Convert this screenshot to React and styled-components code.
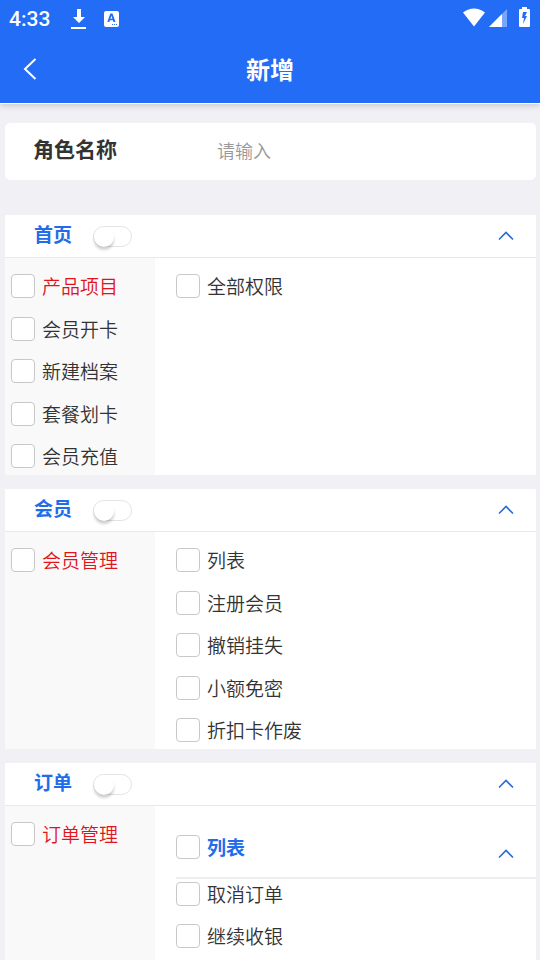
import { useState } from "react";
import styled, { createGlobalStyle } from "styled-components";

const GlobalStyle = createGlobalStyle`
  * {
    box-sizing: border-box;
  }
  body {
    margin: 0;
    background-color: #f0f0f5;
    color: #333;
    font-family: "Noto Sans CJK SC", "Noto Sans", sans-serif;
  }
  input, button {
    font-family: inherit;
  }
`;

const Container = styled.div`
  height: 100vh;
  display: flex;
  flex-direction: column;
`;

const Header = styled.header`
  flex-shrink: 0;
  z-index: 1;
  color: white;
  background-color: #226cf6;
  border-bottom: 1px solid white;
  box-shadow: 0px 2px 6px rgba(0, 0, 0, 0.16);
`;

const StatusBar = styled.div`
  height: 36px;
  padding: 0px 9px;
  display: flex;
  align-items: center;
  justify-content: space-between;
`;

const StatusGroup = styled.div`
  display: flex;
  align-items: center;
`;

const Time = styled.span`
  width: 61px;
  padding-top: 2px;
  font-family: Roboto, sans-serif;
  font-size: 21px;
  font-weight: 500;
`;

const NavBar = styled.div`
  height: 67px;
  padding: 0px 18px 2px;
  display: grid;
  grid-template-columns: 24px 1fr 24px;
  align-items: center;
`;

const IconButton = styled.button`
  display: flex;
  align-items: center;
  justify-content: center;
  width: 24px;
  height: 32px;
  padding: 0;
  border: none;
  background: none;
  color: inherit;
  cursor: pointer;
`;

const Title = styled.h1`
  margin: 0;
  font-size: 24px;
  line-height: 32px;
  font-weight: 700;
  text-align: center;
`;

const Content = styled.main`
  flex: 1;
  min-height: 0;
  padding: 19px 4px 0px 5px;
  overflow-y: auto;
  scrollbar-width: none;
`;

const Field = styled.label`
  height: 57px;
  margin-bottom: 35px;
  padding: 0px 28px 4px;
  display: flex;
  align-items: center;
  background-color: white;
  border-radius: 5px;
`;

const FieldName = styled.span`
  width: 184px;
  padding-bottom: 4px;
  font-size: 21px;
  line-height: 32px;
  font-weight: 700;
`;

const FieldInput = styled.input`
  flex: 1;
  min-width: 0;
  padding: 0;
  border: none;
  outline: none;
  font-size: 18px;
  font-weight: 350;
  color: #333;
  &::placeholder {
    color: #999;
    opacity: 1;
  }
`;

const Section = styled.section`
  margin-bottom: 14px;
  background-color: white;
`;

const SectionHeader = styled.div`
  height: 43px;
  padding: 0px 18px 0px 29px;
  display: flex;
  align-items: center;
  border-bottom: 1px solid #e8e8ea;
`;

const SectionTitle = styled.h2`
  flex-basis: 59px;
  margin: 0;
  padding-bottom: 4px;
  font-size: 19px;
  line-height: 28px;
  font-weight: 700;
  color: #226cea;
`;

const Switch = styled.input`
  appearance: none;
  display: flex;
  width: 39px;
  height: 21px;
  margin: 0px auto 0px 0px;
  border: 1px solid #e3e3e3;
  border-radius: 11px;
  background-color: ${(props) => (props.checked ? "#226cf6" : "white")};
  cursor: pointer;
  &::before {
    content: "";
    width: 20px;
    height: 20px;
    margin-left: ${(props) => (props.checked ? "18px" : "0px")};
    border-radius: 50%;
    background-color: white;
    box-shadow: 0px 3px 3px rgba(0, 0, 0, 0.2);
  }
`;

const SectionBody = styled.div`
  display: grid;
  grid-template-columns: 150px 1fr;
  min-height: 217px;
`;

const List = styled.div`
  display: flex;
  flex-direction: column;
  justify-content: ${(props) => (props.$full ? "space-between" : "flex-start")};
  gap: 18px;
  padding: ${(props) => (props.$nested ? "3px 0px 7px" : "16px 0px 7px")};
`;

const Modules = styled(List)`
  padding-left: 6px;
  background-color: #f9f9f9;
`;

const Permissions = styled(List)`
  padding-left: 21px;
`;

const Group = styled.div`
  padding-left: 21px;
`;

const GroupHeader = styled.div`
  height: 73px;
  padding: 11px 18px 0px 0px;
  display: flex;
  align-items: center;
  justify-content: space-between;
  border-bottom: 2px solid #ededf2;
`;

const GroupToggle = styled.div`
  padding-top: 14px;
`;

const Item = styled.label`
  height: 24px;
  display: flex;
  align-items: center;
  gap: 7px;
  font-size: 19px;
  line-height: 24px;
  font-weight: ${(props) => (props.$bold ? 700 : 350)};
  color: ${(props) => props.$color || "#333"};
  cursor: pointer;
`;

const Box = styled.input`
  appearance: none;
  flex-shrink: 0;
  width: 24px;
  height: 24px;
  margin: 0;
  border: 1px solid #c8c8c8;
  border-radius: 4px;
  background-color: white;
  &:checked {
    border-color: #226cf6;
    background-color: #226cf6;
  }
`;

const Arrow = styled.svg`
  display: block;
  color: #2a6bd8;
  transform: ${(props) => (props.$open ? "none" : "rotate(180deg)")};
`;

const data = [
  {
    title: "首页",
    modules: ["产品项目", "会员开卡", "新建档案", "套餐划卡", "会员充值"],
    permissions: ["全部权限"],
  },
  {
    title: "会员",
    modules: ["会员管理"],
    permissions: ["列表", "注册会员", "撤销挂失", "小额免密", "折扣卡作废"],
  },
  {
    title: "订单",
    modules: ["订单管理"],
    group: "列表",
    permissions: ["取消订单", "继续收银"],
  },
];

const ToggleArrow = ({ open, label, onClick }) => (
  <IconButton
    type="button"
    aria-label={label}
    aria-expanded={open}
    onClick={onClick}
  >
    <Arrow $open={open} width="16" height="10" viewBox="0 0 16 10">
      <path
        d="M1 8.500L8 1.500L15 8.500"
        fill="none"
        stroke="currentColor"
        strokeWidth="1.6"
      />
    </Arrow>
  </IconButton>
);

const CheckItem = ({ text, color, bold }) => (
  <Item $color={color} $bold={bold}>
    <Box type="checkbox" />
    {text}
  </Item>
);

const PermissionSection = ({ section }) => {
  const [open, setOpen] = useState(true);
  const [groupOpen, setGroupOpen] = useState(true);
  const [enabled, setEnabled] = useState(false);

  const items = section.permissions.map((text) => (
    <CheckItem key={text} text={text} />
  ));

  return (
    <Section>
      <SectionHeader>
        <SectionTitle>{section.title}</SectionTitle>
        <Switch
          type="checkbox"
          role="switch"
          aria-label={section.title}
          checked={enabled}
          onChange={(e) => setEnabled(e.target.checked)}
        />
        <ToggleArrow
          open={open}
          label={section.title}
          onClick={() => setOpen(!open)}
        />
      </SectionHeader>
      {open && (
        <SectionBody>
          <Modules $full={section.modules.length > 4}>
            {section.modules.map((text, i) => (
              <CheckItem
                key={text}
                text={text}
                color={i === 0 ? "#e0141a" : undefined}
              />
            ))}
          </Modules>
          {section.group ? (
            <Group>
              <GroupHeader>
                <CheckItem text={section.group} color="#226cea" bold />
                <GroupToggle>
                  <ToggleArrow
                    open={groupOpen}
                    label={section.group}
                    onClick={() => setGroupOpen(!groupOpen)}
                  />
                </GroupToggle>
              </GroupHeader>
              {groupOpen && <List $nested>{items}</List>}
            </Group>
          ) : (
            <Permissions $full={section.permissions.length > 4}>
              {items}
            </Permissions>
          )}
        </SectionBody>
      )}
    </Section>
  );
};

const App = () => {
  const [name, setName] = useState("");

  return (
    <Container>
      <GlobalStyle />
      <Header>
        <StatusBar>
          <StatusGroup>
            <Time>4:33</Time>
            {/* download */}
            <svg width="50" height="22" viewBox="0 0 50 22" fill="white">
              <path d="M7 2h4v8h4l-6 6-6-6h4zM1 20h15v2H1z" />
              <path
                fillRule="evenodd"
                d="M36 4h11a2 2 0 0 1 2 2v12a2 2 0 0 1-2 2H36a2 2 0 0 1-2-2V6a2 2 0 0 1 2-2zM40.300 6.500L37.300 15h2l.6-1.800h3l.6 1.800h2L42.500 6.500zM41.400 8.700l1 3h-2zM42 17v1h1v-1zM44 17v1h1v-1zM46 17v1h1v-1z"
              />
            </svg>
          </StatusGroup>
          <svg width="68" height="22" viewBox="0 0 68 22" fill="white">
            <path d="M0 5.500Q11 -2.500 22 5.500L11 19.500z" />
            <path d="M26 20L44 2v18z" opacity="0.4" />
            <path d="M26 20L39 7v13z" />
            <path
              fillRule="evenodd"
              d="M59 0h5v2h2a1 1 0 0 1 1 1v16a1 1 0 0 1-1 1h-9a1 1 0 0 1-1-1V3a1 1 0 0 1 1-1h2zM60 5l-1 6h2l-1 6 4-8h-2l2-4z"
            />
          </svg>
        </StatusBar>
        <NavBar>
          <IconButton type="button" aria-label="返回">
            <svg width="14" height="22" viewBox="0 0 14 22">
              <path
                d="M12.500 1L2 11l10.500 10"
                fill="none"
                stroke="currentColor"
                strokeWidth="2"
              />
            </svg>
          </IconButton>
          <Title>新增</Title>
        </NavBar>
      </Header>
      <Content>
        <Field>
          <FieldName>角色名称</FieldName>
          <FieldInput
            placeholder="请输入"
            value={name}
            onChange={(e) => setName(e.target.value)}
          />
        </Field>
        {data.map((section) => (
          <PermissionSection key={section.title} section={section} />
        ))}
      </Content>
    </Container>
  );
};

export default App;
